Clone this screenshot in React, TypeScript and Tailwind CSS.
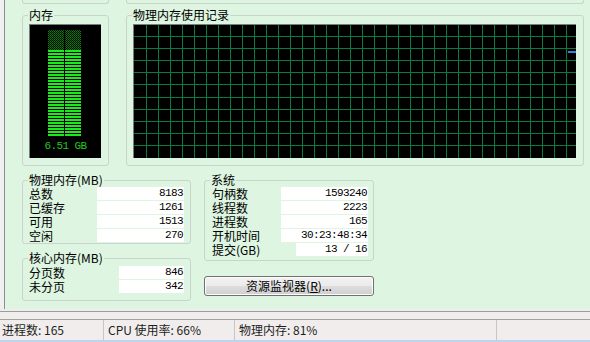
import React from "react";

const physical = [
  ["总数", "8183"],
  ["已缓存", "1261"],
  ["可用", "1513"],
  ["空闲", "270"],
];

const kernel = [
  ["分页数", "846"],
  ["未分页", "342"],
];

const system = [
  ["句柄数", "1593240", "w-[87px]"],
  ["线程数", "2223", "w-[87px]"],
  ["进程数", "165", "w-[87px]"],
  ["开机时间", "30:23:48:34", "w-[87px]"],
  ["提交(GB)", "13 / 16", "w-[72px]"],
];

function Group({
  title,
  className,
  children,
}: {
  title: string;
  className: string;
  children: React.ReactNode;
}) {
  return (
    <fieldset className={`border border-[#c9d5cc] rounded-[3px] ${className}`}>
      <legend className="ml-[5px] px-[1px] text-[12px] leading-[14px] text-black">
        {title}
      </legend>
      {children}
    </fieldset>
  );
}

function Row({ label, value, box }: { label: string; value: string; box: string }) {
  return (
    <div className="flex h-[13px] items-center justify-between">
      <span className="text-[12px] leading-[13px] text-black">{label}</span>
      <span
        className={`${box} h-[13px] bg-white pr-[1px] text-right font-['Liberation_Mono',monospace] text-[11px] leading-[13px] tracking-[-0.6px] text-black`}
      >
        {value}
      </span>
    </div>
  );
}

function Meter() {
  const used = Array.from({ length: 29 }, (_, k) => 25 + k * 3);
  return (
    <div className="ml-[6px] mt-[2px] flex h-[134px] w-[72px] flex-col border-l border-t border-[#7c7c7c] bg-black">
      <svg width="71" height="115" className="block">
        <defs>
          <pattern id="dots" width="2" height="2" patternUnits="userSpaceOnUse">
            <rect x="0" y="0" width="1" height="1" fill="#0a8a0a" />
            <rect x="1" y="1" width="1" height="1" fill="#066a06" />
          </pattern>
        </defs>
        <rect x="18" y="5" width="16" height="20" fill="url(#dots)" />
        <rect x="35" y="5" width="16" height="20" fill="url(#dots)" />
        {used.map((y) => (
          <g key={y}>
            <rect x="18" y={y} width="16" height="2" fill="#1ee81e" />
            <rect x="35" y={y} width="16" height="2" fill="#1ee81e" />
          </g>
        ))}
      </svg>
      <div className="text-center font-['Liberation_Mono',monospace] text-[11px] leading-[13px] tracking-[-0.6px] text-[#20c820]">
        6.51 GB
      </div>
    </div>
  );
}

function History() {
  const cols = Array.from({ length: 37 }, (_, k) => 12 + k * 12);
  const rows = Array.from({ length: 10 }, (_, k) => 11 + Math.round(k * 12.1));
  return (
    <div className="ml-[6px] mt-[2px] h-[134px] w-[443px] border-l border-t border-[#7c7c7c] bg-black">
      <svg width="442" height="133" className="block">
        {cols.map((x) => (
          <rect key={"c" + x} x={x} y="0" width="1" height="133" fill="#0a7a40" />
        ))}
        {rows.map((y) => (
          <rect key={"r" + y} x="0" y={y} width="442" height="1" fill="#0a7a40" />
        ))}
        <rect x="434" y="26" width="8" height="2" fill="#3a80d8" />
      </svg>
    </div>
  );
}

export default function App() {
  return (
    <div className="flex h-[342px] w-[590px] flex-col overflow-hidden bg-[#f0f0f0] font-['Noto_Sans_CJK_SC',sans-serif]">
      <div className="ml-[4px] h-[309px] border-l border-[#8e8e8e] bg-[#ddf5e1]">
        <div className="flex h-[4px]">
          <div className="ml-[17px] h-[4px] w-[87px] rounded-b-[3px] border-b border-l border-r border-[#c9d5cc]" />
          <div className="ml-[17px] h-[4px] w-[458px] rounded-b-[3px] border-b border-l border-r border-[#c9d5cc]" />
        </div>

        <div className="ml-[17px] mt-[4px] flex gap-[17px]">
          <Group title="内存" className="h-[158px] w-[87px]">
            <Meter />
          </Group>
          <Group title="物理内存使用记录" className="h-[158px] w-[458px]">
            <History />
          </Group>
        </div>

        <div className="ml-[17px] mt-[7px] flex gap-[13px]">
          <div className="flex w-[169px] flex-col">
            <Group title="物理内存(MB)" className="h-[71px] w-[169px]">
              <div className="flex flex-col gap-[1px] pl-[6px] pr-[6px]">
                {physical.map(([l, v]) => (
                  <Row key={l} label={l} value={v} box="w-[87px]" />
                ))}
              </div>
            </Group>
            <Group title="核心内存(MB)" className="mt-[7px] h-[50px] w-[169px]">
              <div className="mt-[1px] flex flex-col gap-[1px] pl-[6px] pr-[6px]">
                {kernel.map(([l, v]) => (
                  <Row key={l} label={l} value={v} box="w-[65px]" />
                ))}
              </div>
            </Group>
          </div>

          <div className="flex w-[170px] flex-col">
            <Group title="系统" className="h-[88px] w-[170px]">
              <div className="flex flex-col gap-[1px] pl-[7px] pr-[5px]">
                {system.map(([l, v, b]) => (
                  <Row key={l} label={l} value={v} box={b} />
                ))}
              </div>
            </Group>
            <button className="mt-[15px] h-[20px] w-[170px] rounded-[3px] border border-[#707070] bg-[linear-gradient(#f2f2f2_0%,#ebebeb_50%,#dddddd_51%,#cfcfcf_100%)] text-[12px] leading-[16px] text-black shadow-[inset_0_0_0_1px_#fcfcfc]">
              资源监视器(<span className="underline">R</span>)...
            </button>
          </div>
        </div>
      </div>

      <div className="h-[2px] bg-[#f0eeed]" />
      <div className="h-[1px] bg-[#9c9c9c]" />
      <div className="h-[7px] bg-[#f0eeed]" />
      <div className="h-[1px] bg-[#a4a2a0]" />
      <div className="flex h-[20px] items-center bg-[#f0edec] text-[12px] leading-[20px] text-[#1e1e1e]">
        <div className="w-[104px] border-r border-[#cbc6c4] pl-[2px]">进程数: 165</div>
        <div className="w-[131px] border-r border-[#cbc6c4] pl-[4px]">CPU 使用率: 66%</div>
        <div className="w-[262px] border-r border-[#cbc6c4] pl-[4px]">物理内存: 81%</div>
        <div className="flex-1" />
      </div>
      <div className="h-[2px] bg-[#bcd4ec]" />
    </div>
  );
}
